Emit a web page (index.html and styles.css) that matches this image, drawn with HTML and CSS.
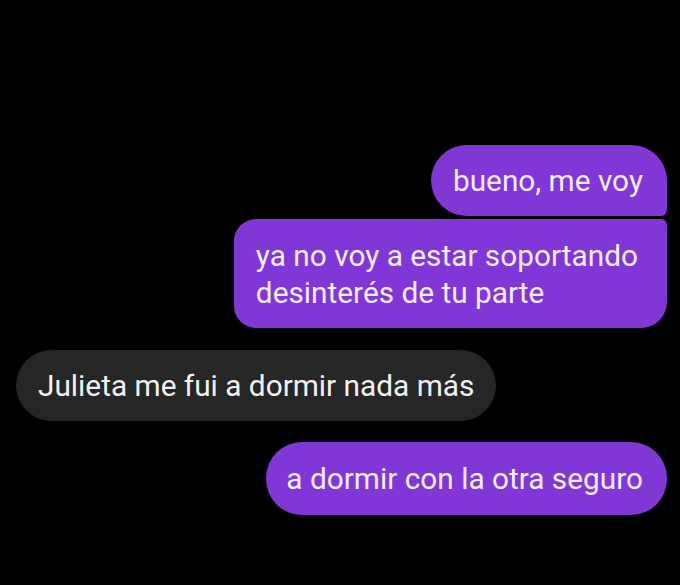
FILE: index.html
```html
<!DOCTYPE html>
<html lang="es">
<head>
<meta charset="utf-8">
<link rel="stylesheet" href="styles.css">
</head>
<body>
<div class="chat">
  <div class="msg out first">bueno, me voy</div>
  <div class="msg out last">ya no voy a estar soportando<br>desinterés de tu parte</div>
  <div class="msg in">Julieta me fui a dormir nada más</div>
  <div class="msg out single">a dormir con la otra seguro</div>
</div>
</body>
</html>
```

FILE: styles.css
```css
html, body {
  margin: 0;
  padding: 0;
  background: #000;
}
body {
  width: 680px;
  height: 585px;
  overflow: hidden;
  font-family: Roboto, "Noto Sans", sans-serif;
}
.chat {
  display: flex;
  flex-direction: column;
  padding: 145px 13px 0 16px;
}
.msg {
  font-size: 29.8px;
  line-height: 37px;
  padding: 17px 24px 17px 22px;
  white-space: nowrap;
}
.out {
  align-self: flex-end;
  background: #8037d6;
  color: #f6ecff;
}
.in {
  align-self: flex-start;
  background: #262626;
  color: #f2f2f2;
  border-radius: 36px;
  margin-top: 22px;
  padding-right: 22px;
}
.first {
  border-radius: 36px 36px 6px 36px;
}
.last {
  margin-top: 3px;
  border-radius: 22px 6px 26px 22px;
  padding-top: 18px;
  padding-right: 29px;
}
.single {
  margin-top: 21px;
  border-radius: 36px;
  padding: 18px 24px 18px 20px;
}
```
